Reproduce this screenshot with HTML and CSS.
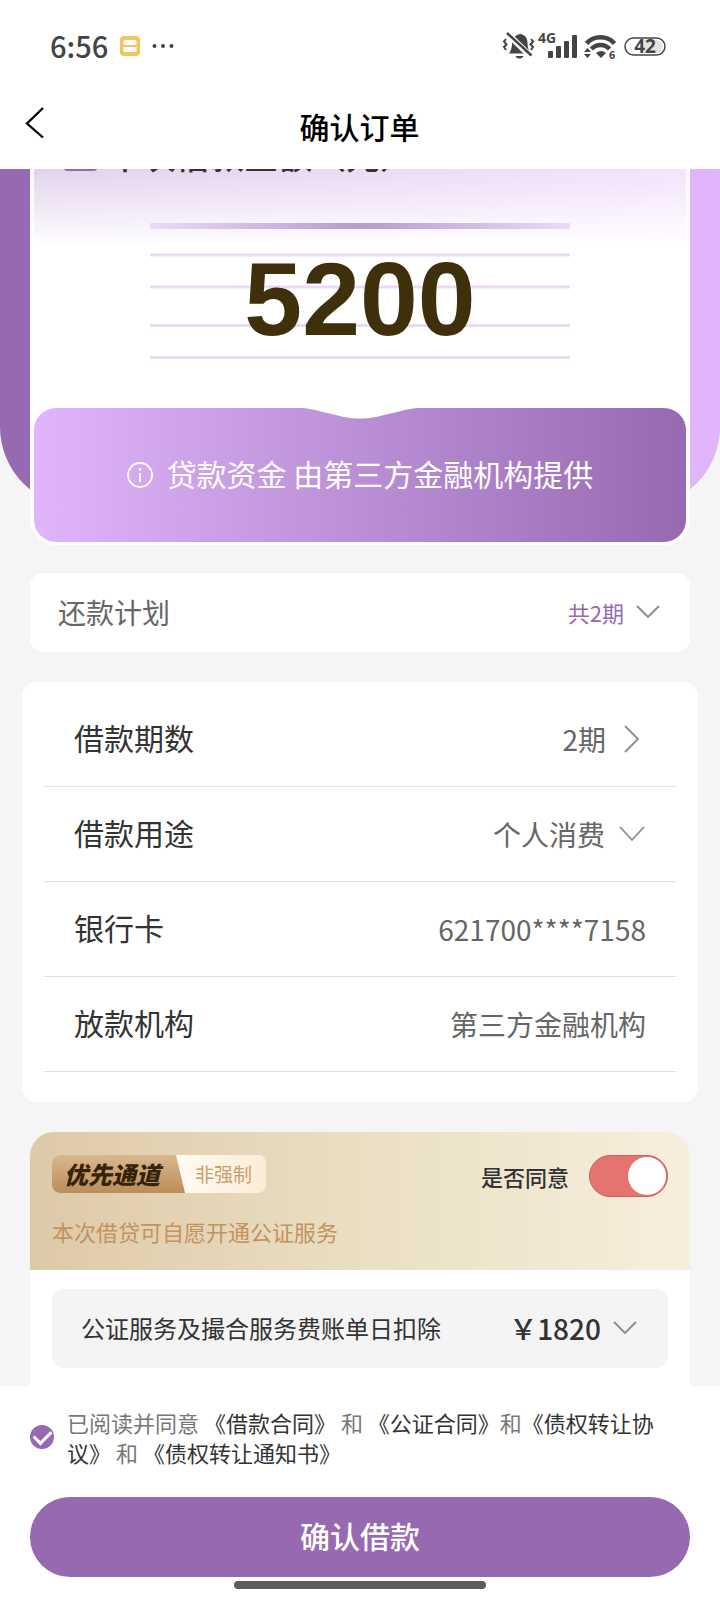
FILE: index.html
```html
<!DOCTYPE html>
<html lang="zh-CN">
<head>
<meta charset="utf-8">
<meta name="viewport" content="width=device-width, initial-scale=1">
<title>确认订单</title>
<link rel="stylesheet" href="styles.css">
</head>
<body>
<div class="status">
  <span class="status-time">6:56</span>
  <svg class="status-app" width="20" height="20" viewBox="0 0 20 20"><rect width="20" height="20" rx="4" fill="#f0c75e"/><path d="M5 4h10a1.500 1.500 0 0 1 1.500 1.500V9h-13V5.500A1.500 1.500 0 0 1 5 4zM3.500 11h13v3.500A1.500 1.500 0 0 1 15 16H5a1.500 1.500 0 0 1-1.500-1.500z" fill="#fff"/></svg>
  <svg class="status-more" width="22" height="6" viewBox="0 0 22 6" fill="#444"><circle cx="2.500" cy="3" r="2"/><circle cx="11" cy="3" r="2"/><circle cx="19.500" cy="3" r="2"/></svg>
  <svg class="status-icons" width="166" height="30" viewBox="0 0 166 30" fill="#444">
    <path d="M7 22.500c2-3 3-6 3-10 0-5 3-8.500 8-9.500 5 .5 7.500 4 7.500 9 0 4.500 1 7.500 3 10.500zM13.500 25h8c-.8 1.800-2.200 2.600-4 2.600s-3.200-.8-4-2.600z"/>
    <path d="M5 2.500l25 24" stroke="#fff" stroke-width="6"/>
    <path d="M5 2l24.500 22.500" stroke="#444" stroke-width="2.500"/>
    <path d="M4 8L2 10.500l2.500 3L2 16l2 3M29 8l2 2.500-2.500 3 2.500 2.500-2 3" fill="none" stroke="#444" stroke-width="2"/>
    <text x="36" y="12" class="net">4G</text>
    <rect x="46" y="20" width="5" height="7" rx="1"/><rect x="54" y="15" width="5" height="12" rx="1"/><rect x="62" y="10" width="5" height="17" rx="1"/><rect x="70" y="4" width="5" height="23" rx="1"/>
    <path d="M84.500 12.500a19 19 0 0 1 28 0M89.500 18a12 12 0 0 1 18 0" fill="none" stroke="#444" stroke-width="4.500"/>
    <path d="M94 22q5-4 10 0l-5 5zM82 21l3.500-4 3.500 4zM82 23l3.500 4 3.500-4z"/>
    <text x="107" y="28" class="gen">6</text>
    <rect x="123" y="7" width="40" height="17" rx="8.500" fill="#fff" stroke="#444" stroke-width="1.500"/>
    <path d="M142 9h12a6.500 6.500 0 0 1 0 13H142z" fill="#e2e2e2"/>
    <text x="143" y="22" text-anchor="middle" class="bat">42</text>
  </svg>
</div>

<header class="nav">
  <button class="back" aria-label="返回"><svg width="20" height="34" viewBox="0 0 20 34" fill="none" stroke="#000" stroke-width="2.300"><path d="M18 2L2 17.500l16 14"/></svg></button>
  <h1 class="nav-title">确认订单</h1>
</header>

<main class="view">
  <div class="content">
    <section class="hero">
      <div class="amount-card">
        <div class="amount-head">
          <svg width="33" height="28" viewBox="0 0 33 28"><rect width="33" height="28" rx="3" fill="#9669b0"/><path d="M7 9h19M7 17h12" stroke="#fff" stroke-width="2"/></svg>
          <h2 class="amount-title">本次借款金额（元）</h2>
        </div>
        <div class="amount">
          <svg class="amount-lines" width="420" height="138" viewBox="0 0 420 138">
            <defs><linearGradient id="bar"><stop offset="0" stop-color="#eed9fa"/><stop offset=".5" stop-color="#b59ccb"/><stop offset="1" stop-color="#eed9fa"/></linearGradient></defs>
            <rect width="420" height="6" fill="url(#bar)"/>
            <path d="M0 32h420M0 64h420M0 102.500h420M0 134.500h420" stroke="#ecd9fa" stroke-width="3"/>
          </svg>
          <strong class="amount-value">5200</strong>
        </div>
        <div class="funder">
          <svg class="notch" width="120" height="11" viewBox="0 0 120 11"><path d="M4 0C18 2 30 6 44 9Q60 12 76 9C90 6 102 2 116 0z" fill="#fff"/></svg>
          <svg width="26" height="26" viewBox="0 0 26 26" fill="none" stroke="#fff"><circle cx="13" cy="13" r="12" stroke-width="1.800"/><path d="M13 11v9" stroke-width="2"/><circle cx="13" cy="7.500" r="1.400" fill="#fff" stroke="none"/></svg>
          <span class="funder-text">贷款资金 由第三方金融机构提供</span>
        </div>
      </div>
    </section>

    <button class="plan">
      <span>还款计划</span>
      <span class="plan-count">共2期<svg width="24" height="14" viewBox="0 0 24 14" fill="none" stroke="#8c8c8c" stroke-width="1.800"><path d="M1 1l11 11L23 1"/></svg></span>
    </button>

    <section class="details">
      <div class="row"><span class="label" id="term">借款期数</span><button class="value" aria-labelledby="term">2期<span class="arrow"><svg width="16" height="28" viewBox="0 0 16 28" fill="none" stroke="#8c8c8c" stroke-width="1.800"><path d="M1 1l13 13L1 27"/></svg></span></button></div>
      <div class="row"><label class="label" for="use">借款用途</label><span class="value"><select id="use" class="pick"><option>个人消费</option></select><span class="arrow"><svg width="26" height="16" viewBox="0 0 26 16" fill="none" stroke="#8c8c8c" stroke-width="1.800"><path d="M1 1l12 13L25 1"/></svg></span></span></div>
      <div class="row"><span class="label">银行卡</span><span class="value">621700****7158</span></div>
      <div class="row"><span class="label">放款机构</span><span class="value">第三方金融机构</span></div>
    </section>

    <section class="priority">
      <div class="priority-head">
        <div class="priority-top">
          <div class="badge"><b class="badge-main">优先通道</b><span class="badge-note">非强制</span></div>
          <label class="agree">是否同意<input class="switch" type="checkbox" role="switch" checked></label>
        </div>
        <p class="priority-text">本次借贷可自愿开通公证服务</p>
      </div>
      <button class="fee">
        <span>公证服务及撮合服务费账单日扣除</span>
        <span class="fee-sum">￥1820<svg width="24" height="14" viewBox="0 0 24 14" fill="none" stroke="#8c8c8c" stroke-width="1.800"><path d="M1 1l11 11L23 1"/></svg></span>
      </button>
    </section>
  </div>
</main>

<footer class="footer">
  <div class="terms">
    <input class="tick" id="tick" type="checkbox" checked>
    <p class="terms-text"><label for="tick">已阅读并同意</label> <a href="#">《借款合同》</a> 和 <a href="#">《公证合同》</a>和<a href="#">《债权转让协议》</a> 和 <a href="#">《债权转让通知书》</a></p>
  </div>
  <button class="submit">确认借款</button>
  <div class="home"></div>
</footer>
</body>
</html>
```
FILE: styles.css
```css
* { box-sizing: border-box; }
body {
  margin: 0;
  height: 100vh;
  display: flex;
  flex-direction: column;
  background: #f5f5f5;
  color: #333;
  font-family: "Noto Sans CJK SC", "Noto Sans", sans-serif;
}
button, select, input { font: inherit; color: inherit; border: 0; margin: 0; padding: 0; background: none; text-align: left; }
h1, h2, p { margin: 0; }
svg { flex: none; }

.status {
  flex: none;
  display: flex;
  align-items: center;
  height: 92px;
  padding: 0 52px 0 50px;
  background: #fff;
}
.status-time { font-size: 29px; line-height: 40px; padding-bottom: 2px; font-weight: 500; color: #444; }
.status-app { margin-left: 12px; }
.status-more { margin-left: 12px; }
.status-icons { margin-left: auto; overflow: visible; font-family: "Noto Sans", sans-serif; font-weight: 700; }
.net { font-size: 14px; }
.gen { font-size: 11px; }
.bat { font-size: 19px; }

.nav {
  flex: none;
  display: grid;
  grid-template-columns: 60px 1fr 60px;
  align-items: center;
  height: 77px;
  padding: 0 26px 10px 25px;
  background: #fff;
}
.back { display: flex; padding-bottom: 6px; }
.nav-title { text-align: center; font-size: 30px; line-height: 40px; font-weight: 500; color: #000; }

.view { flex: 1; min-height: 0; overflow: hidden; }
.content { margin-top: -40px; }

.hero { position: relative; padding: 0 30px; }
.hero::before {
  content: "";
  position: absolute;
  inset: 0 0 38px;
  border-radius: 0 0 80px 80px;
  background: linear-gradient(90deg, #9669b0 5%, #e0b5fb 95%);
}
.amount-card {
  position: relative;
  padding: 0 4px 3px;
  border-radius: 0 0 26px 26px;
  background: #fff;
}
.amount-head {
  display: flex;
  align-items: flex-start;
  gap: 11px;
  height: 118px;
  padding: 14px 30px 0;
  background: linear-gradient(180deg, #fff0 34%, #fff 100%), linear-gradient(90deg, #e2d3ec, #f3e3fc);
}
.amount-title { font-size: 34px; line-height: 40px; font-weight: 500; margin-top: -8px; white-space: nowrap; }
.amount {
  display: grid;
  place-items: center;
  position: relative;
  height: 161px;
}
.amount-lines { position: absolute; top: -24px; left: calc(50% - 210px); }
.amount-value {
  position: relative;
  padding-bottom: 57px;
  font-family: "Liberation Sans Narrow", "Liberation Sans", sans-serif;
  font-size: 104px;
  line-height: 104px;
  color: #3f300c;
}
.funder {
  position: relative;
  display: flex;
  align-items: center;
  justify-content: center;
  gap: 14px;
  height: 134px;
  border-radius: 22px;
  background: linear-gradient(90deg, #e0b5fb, #9669b0);
  color: #fff;
  font-size: 30px;
  line-height: 40px;
}
.funder-text { padding-bottom: 4px; }
.notch { position: absolute; top: 0; left: calc(50% - 60px); }

.plan {
  display: flex;
  align-items: center;
  justify-content: space-between;
  width: calc(100% - 60px);
  height: 79px;
  margin: 28px 30px 30px;
  padding: 0 30px 2px 28px;
  border-radius: 14px;
  background: #fff;
  color: #666;
  font-size: 28px;
}
.plan-count { display: flex; align-items: center; gap: 12px; font-size: 22px; color: #9669b0; }

.details { margin: 0 22px 30px; padding: 10px 22px 30px; border-radius: 14px; background: #fff; }
.row {
  display: flex;
  align-items: center;
  justify-content: space-between;
  height: 95px;
  padding: 0 30px;
  border-bottom: 1px solid #e0e0e0;
}
.label { font-size: 30px; padding-bottom: 4px; }
.value { display: flex; align-items: center; font-size: 28px; color: #666; }
.arrow { display: flex; justify-content: center; width: 28px; margin-left: 12px; }
.pick { appearance: none; }

.priority { margin: 0 30px; border-radius: 24px 24px 0 0; background: #fff; overflow: hidden; padding-bottom: 60px; }
.priority-head { padding: 23px 22px 0; height: 138px; background: linear-gradient(90deg, #dec9a8, #eadfc3 50%, #f7efdd); }
.priority-top { display: flex; justify-content: space-between; align-items: center; height: 42px; }
.badge {
  display: flex;
  align-items: center;
  align-self: flex-start;
  height: 38px;
  border-radius: 8px;
  overflow: hidden;
  background: linear-gradient(90deg, #fffaf2 60%, #fbecd6);
}
.badge-main {
  width: 133px;
  padding-left: 12px;
  line-height: 38px;
  font-size: 24px;
  font-weight: 900;
  font-style: italic;
  color: #36230a;
  background: linear-gradient(#d9b88e, #bb8d58);
  clip-path: polygon(0 0, 124px 0, 100% 100%, 0 100%);
}
.badge-note { padding: 0 14px 0 10px; font-size: 19px; line-height: 38px; color: #c9a06c; }
.agree { display: flex; align-items: center; gap: 20px; font-size: 22px; font-weight: 500; }
.switch {
  appearance: none;
  display: flex;
  justify-content: flex-end;
  width: 79px;
  height: 42px;
  padding: 1px;
  border: 1px solid #c8645f;
  border-radius: 21px;
  background: #e5736f;
}
.switch::before { content: ""; width: 38px; height: 38px; border-radius: 50%; background: #fff; }
.priority-text { margin-top: 17px; font-size: 22px; line-height: 34px; color: #c2935f; }
.fee {
  display: flex;
  align-items: center;
  justify-content: space-between;
  width: calc(100% - 44px);
  height: 79px;
  margin: 19px 22px 0;
  padding: 0 31px 2px 29px;
  border-radius: 12px;
  background: #f4f4f4;
  font-size: 24px;
}
.fee-sum { display: flex; align-items: center; gap: 12px; font-size: 28px; font-weight: 500; }

.footer { flex: none; padding: 21px 30px 11px; background: #fff; }
.terms { display: flex; align-items: center; gap: 13px; margin-bottom: 30px; }
.tick {
  appearance: none;
  flex: none;
  display: grid;
  place-items: center;
  width: 24px;
  height: 24px;
  border-radius: 50%;
  background: #9669b0;
}
.tick::before {
  content: "";
  width: 14px;
  height: 8px;
  margin-bottom: 4px;
  border: solid #fff;
  border-width: 0 0 3px 3px;
  rotate: -45deg;
}
.terms-text { font-size: 22px; line-height: 30px; color: #777; }
.terms-text a { color: #333; text-decoration: none; }
.submit {
  display: block;
  width: 100%;
  height: 80px;
  padding-bottom: 4px;
  border-radius: 40px;
  background: #9669b0;
  color: #fff;
  font-size: 30px;
  font-weight: 500;
  text-align: center;
}
.home { width: 252px; height: 8px; margin: 4px auto 0; border-radius: 4px; background: #5b5c5b; }
```
